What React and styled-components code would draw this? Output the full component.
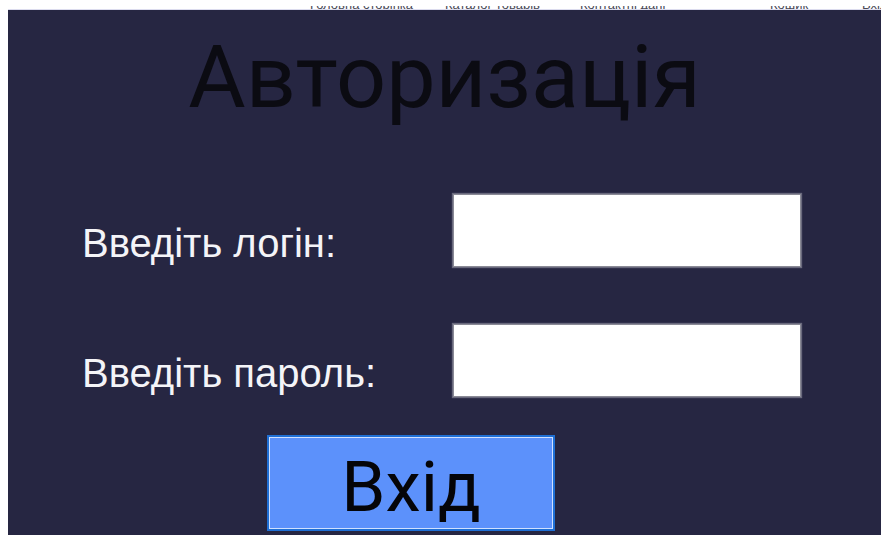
import React, { useState } from "react";
import styled, { createGlobalStyle } from "styled-components";

const GlobalStyle = createGlobalStyle`
  html, body {
    margin: 0;
    padding: 0;
    background: #ffffff;
    overflow: hidden;
  }
  body {
    padding-left: 8px;
  }
`;

const navLinks = [
  { title: "Головна сторінка", width: 135 },
  { title: "Каталог товарів", width: 135 },
  { title: "Контактні дані", width: 190 },
  { title: "Кошик", width: 92 },
  { title: "Вхід", width: 40 },
];

const Login = () => {
  const [login, setLogin] = useState("");
  const [password, setPassword] = useState("");

  const handleSubmit = (event) => {
    event.preventDefault();
    console.log(login, password);
  };

  return (
    <>
      <GlobalStyle />
      <NavBar>
        {navLinks.map((link) => (
          <NavItem key={link.title} $w={link.width}>
            <NavText>{link.title}</NavText>
          </NavItem>
        ))}
      </NavBar>
      <Panel onSubmit={handleSubmit}>
        <Title>Авторизація</Title>
        <FormGrid>
          <Label htmlFor="login">Введіть логін:</Label>
          <Field
            id="login"
            value={login}
            onChange={(e) => setLogin(e.target.value)}
          />
          <Label htmlFor="password">Введіть пароль:</Label>
          <Field
            id="password"
            type="password"
            value={password}
            onChange={(e) => setPassword(e.target.value)}
          />
        </FormGrid>
        <SubmitButton type="submit">Вхід</SubmitButton>
      </Panel>
    </>
  );
};

export default Login;

// menu strip above the panel, scrolled so only the bottom of the links shows
const NavBar = styled.nav`
  display: flex;
  height: 9px;
  padding-top: 6px;
  padding-left: 302px;
  box-sizing: content-box;
  height: 3px;
  border-bottom: 1px solid #dcdcee;
`;

const NavItem = styled.div`
  flex: none;
  width: ${(p) => p.$w}px;
  height: 3px;
  overflow: hidden;
`;

const NavText = styled.span`
  display: block;
  margin-top: -8px;
  font-family: "Liberation Sans", Arial, sans-serif;
  font-size: 13px;
  line-height: 13px;
  color: #4a4a56;
  white-space: nowrap;
`;

const Panel = styled.form`
  display: flex;
  flex-direction: column;
  height: 530px;
  padding: 23px 0 0 74px;
  box-sizing: border-box;
  background: #262642;
`;

const Title = styled.h1`
  margin: 0 0 0 -74px;
  font-family: Roboto, "Noto Sans", sans-serif;
  font-weight: 400;
  font-size: 88px;
  line-height: 1;
  color: #0b0b12;
  text-align: center;
`;

const FormGrid = styled.div`
  display: grid;
  grid-template-columns: 371px 348px;
  row-gap: 57px;
  margin-top: 73px;
`;

const Label = styled.label`
  padding-top: 29px;
  font-family: "Liberation Sans", Arial, sans-serif;
  font-size: 40px;
  line-height: 1;
  color: #f4f4f8;
  white-space: nowrap;
`;

const Field = styled.input`
  width: 348px;
  height: 73px;
  box-sizing: border-box;
  border: 1px solid #8a8a96;
  box-shadow: 0 0 1px 1px rgba(150, 150, 165, 0.6);
  background: #ffffff;
  outline: none;
  padding: 0 10px;
  font-family: "Liberation Sans", Arial, sans-serif;
  font-size: 30px;
`;

const SubmitButton = styled.button`
  align-self: flex-start;
  margin: 38px 0 0 185px;
  width: 288px;
  height: 96px;
  padding: 6px 0 0;
  box-sizing: border-box;
  border: 2px solid #1f6fd4;
  box-shadow: inset 0 0 0 1px #cfe0ff;
  background: #5c91fb;
  font-family: Roboto, "Noto Sans", sans-serif;
  font-size: 71px;
  line-height: 1;
  color: #050508;
  cursor: pointer;
`;
